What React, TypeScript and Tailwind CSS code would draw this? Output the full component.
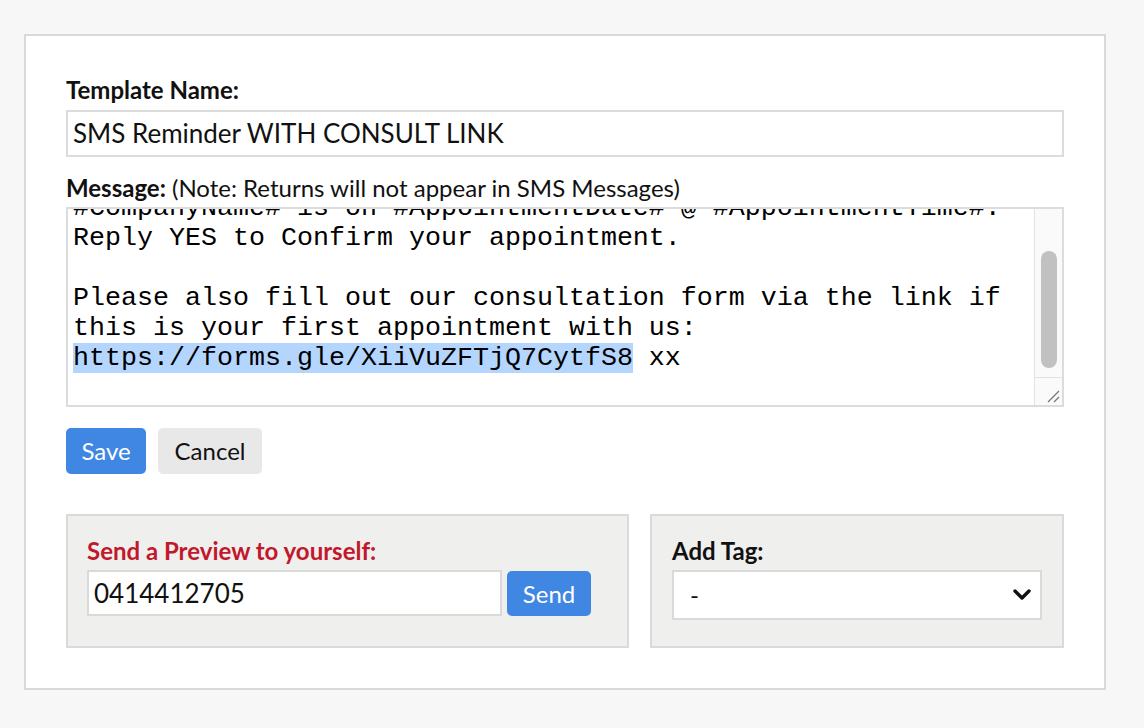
const lato = { fontFamily: 'Lato, "Liberation Sans", sans-serif' }

function Chevron() {
  return (
    <svg width="18" height="12" viewBox="0 0 18 12" className="shrink-0">
      <polyline points="2,2 9,9 16,2" fill="none" stroke="#111" strokeWidth="3.4" strokeLinecap="round" strokeLinejoin="round" />
    </svg>
  )
}

function MessageBox() {
  const mono = { fontFamily: '"Liberation Mono", "Courier New", monospace' }
  return (
    <div className="flex h-[200px] border-2 border-[#dcdcdc] bg-white">
      <div className="flex-1 overflow-hidden pl-[5px]">
        <div className="-mt-[16px] text-[26.67px] leading-[30px] text-black whitespace-pre" style={mono}>
          <div>#CompanyName# is on #AppointmentDate# @ #AppointmentTime#.</div>
          <div>Reply YES to Confirm your appointment.</div>
          <div>&nbsp;</div>
          <div>Please also fill out our consultation form via the link if</div>
          <div>this is your first appointment with us:</div>
          <div>
            <span className="bg-[#b4d6fe]">https://forms.gle/XiiVuZFTjQ7CytfS8</span> xx
          </div>
        </div>
      </div>
      <div className="flex w-[28px] flex-col border-l border-[#e3e3e3] bg-[#fafafa]">
        <div className="flex-1 pl-[6px] pt-[42px]">
          <div className="h-[117px] w-[16px] rounded-full bg-[#c1c1c1]" />
        </div>
        <div className="flex h-[28px] items-end justify-end border-t border-[#e3e3e3] pb-[2px] pr-[2px]">
          <svg width="14" height="14" viewBox="0 0 14 14">
            <line x1="2" y1="13" x2="13" y2="2" stroke="#777" strokeWidth="1.2" />
            <line x1="8" y1="13" x2="13" y2="8" stroke="#777" strokeWidth="1.2" />
          </svg>
        </div>
      </div>
    </div>
  )
}

export default function App() {
  return (
    <div className="min-h-[728px] bg-[#f7f7f7] pt-[34px] pl-[24px]" style={lato}>
      <div className="w-[1082px] border-2 border-[#d9d9d9] bg-white px-[40px] pt-[40px] pb-[40px]">
        <label className="block text-[24px] font-bold leading-[28px] text-[#111]">Template Name:</label>
        <div className="mt-[6px] flex h-[47px] items-center border-2 border-[#dcdcdc] px-[5px] text-[26px] text-[#111]">
          SMS Reminder WITH CONSULT LINK
        </div>

        <div className="mt-[17px] text-[24px] leading-[28px] text-[#111]">
          <span className="font-bold">Message:</span> (Note: Returns will not appear in SMS Messages)
        </div>
        <div className="mt-[5px]">
          <MessageBox />
        </div>

        <div className="mt-[21px] flex gap-[12px]">
          <button className="h-[46px] w-[80px] rounded-[5px] bg-[#3f87e2] text-[24px] text-white">Save</button>
          <button className="h-[46px] w-[104px] rounded-[5px] bg-[#e8e8e8] text-[24px] text-[#111]">Cancel</button>
        </div>

        <div className="mt-[40px] flex gap-[21px]">
          <div className="h-[134px] w-[563px] border-2 border-[#dadada] bg-[#efefee] px-[19px] pt-[21px]">
            <div className="text-[24px] font-bold leading-[28px] text-[#c2182b]">Send a Preview to yourself:</div>
            <div className="mt-[5px] flex items-start gap-[5px]">
              <div className="flex h-[46px] w-[415px] items-center border-2 border-[#dadada] bg-white px-[5px] text-[26px] text-[#111]">
                0414412705
              </div>
              <button className="mt-[1px] h-[45px] w-[84px] rounded-[5px] bg-[#3f87e2] text-[24px] text-white">Send</button>
            </div>
          </div>
          <div className="h-[134px] flex-1 border-2 border-[#dadada] bg-[#efefee] px-[20px] pt-[21px]">
            <div className="text-[24px] font-bold leading-[28px] text-[#111]">Add Tag:</div>
            <div className="mt-[5px] flex h-[50px] w-[370px] items-center justify-between border-2 border-[#dadada] bg-white pl-[16px] pr-[9px] text-[24px] text-[#111]">
              <span>-</span>
              <Chevron />
            </div>
          </div>
        </div>
      </div>
    </div>
  )
}
